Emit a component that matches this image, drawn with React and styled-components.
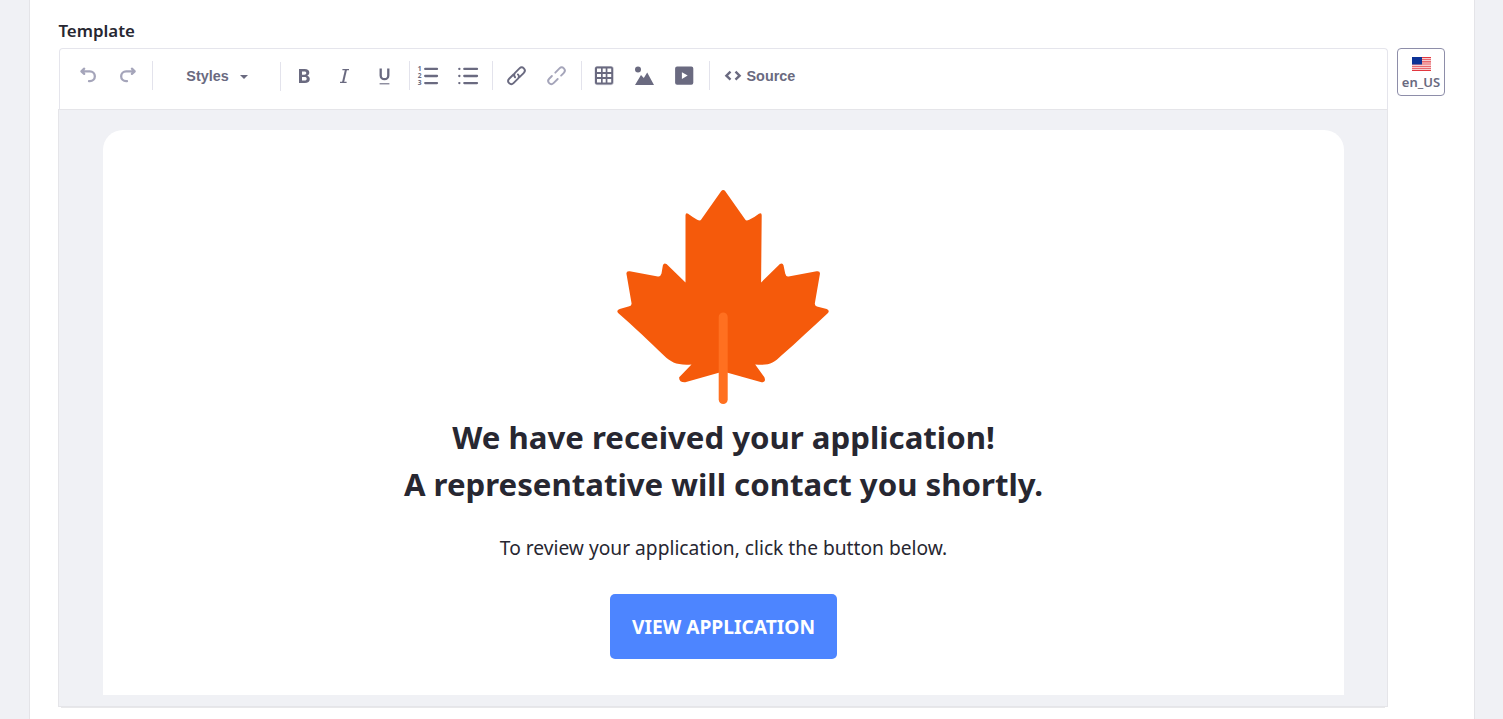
import React from "react";
import styled, { createGlobalStyle } from "styled-components";

const Global = createGlobalStyle`
  *, *::before, *::after { box-sizing: border-box; }
  body { margin: 0; background: #f0f1f5; font-family: "Noto Sans", sans-serif; overflow: hidden; }
`;

const Page = styled.div`
  height: 719px;
  padding: 0 28px 0 29px;
`;
const Panel = styled.main`
  height: 719px;
  padding: 21px 29px 0 28px;
  background: #fff;
  border: solid #e4e4e8;
  border-width: 0 1px;
`;
const Label = styled.h2`
  margin: 0;
  height: 27px;
  padding-left: 0.4px;
  font-size: 16.9px;
  font-weight: 600;
  line-height: 20px;
  color: #272731;
`;
const Columns = styled.div`
  display: flex;
  align-items: flex-start;
  gap: 9px;
`;
const Editor = styled.section`
  width: 1330px;
`;
const Toolbar = styled.div`
  display: flex;
  align-items: flex-start;
  height: 61px;
  margin-left: 1px;
  padding: 12px 0 0 8px;
  border: 1px solid #e5e5ec;
  border-bottom: 0;
  border-radius: 4px 4px 0 0;
`;
const Tool = styled.button`
  display: flex;
  align-items: center;
  justify-content: center;
  width: 40px;
  height: 29px;
  padding: 0;
  border: 0;
  background: none;
  color: ${(p) => (p.$muted ? "#a5a5ba" : "#6a6a80")};
`;
const Separator = styled.span`
  width: 1px;
  height: 29px;
  margin: ${(p) => p.$top || 0}px ${(p) => p.$right}px 0 ${(p) => p.$left}px;
  background: #e3e3ec;
`;
const TextTool = styled(Tool)`
  width: auto;
  font: bold 14.4px "Liberation Sans", Arial, sans-serif;
`;
const StylesTool = styled(TextTool)`
  width: 127px;
  gap: 11px;
  padding-left: 1px;
`;
const SourceTool = styled(TextTool)`
  gap: 4.5px;
`;
const Caret = styled.span`
  margin-top: 2px;
  border: solid transparent;
  border-width: 4px 4.5px 0;
  border-top-color: currentColor;
`;
const Canvas = styled.div`
  height: 598px;
  padding: 20px 43px 11px 44px;
  background: #f0f1f5;
  border: 1px solid #e5e5e9;
`;
const CanvasShadow = styled.div`
  height: 1px;
  margin: 0 3px;
  background: #e8e8ea;
`;
const Mail = styled.article`
  display: flex;
  flex-direction: column;
  align-items: center;
  height: 565px;
  padding-top: 60px;
  background: #fff;
  border-radius: 20px 20px 0 0;
  color: #272731;
`;
const Title = styled.h1`
  margin: 4px 0 0;
  font-size: 31.2px;
  font-weight: 700;
  line-height: 47px;
  text-align: center;
`;
const Copy = styled.p`
  margin: 25px 0 0;
  font-size: 19.2px;
  line-height: 30px;
`;
const Cta = styled.a`
  display: flex;
  align-items: center;
  justify-content: center;
  width: 227px;
  height: 65px;
  margin-top: 31px;
  border-radius: 5px;
  background: #4d85ff;
  color: #fff;
  font-size: 19.2px;
  font-weight: 700;
`;
const Locale = styled.button`
  display: flex;
  flex-direction: column;
  align-items: center;
  gap: 2px;
  width: 48px;
  height: 48px;
  padding: 8px 0 0;
  border: 1px solid #8e8ea9;
  border-radius: 4px;
  background: #fff;
  color: #6a6a80;
  font: 600 13px/18px "Noto Sans", sans-serif;
  white-space: nowrap;
`;

const Icon = ({ children, ...rest }) => (
  <svg width="20" height="20" viewBox="0 0 20 20" fill="currentColor" overflow="visible" {...rest}>{children}</svg>
);
const Line = ({ children, width = 2, cap = "round" }) => (
  <Icon fill="none" stroke="currentColor" strokeWidth={width} strokeLinecap={cap} strokeLinejoin="round">{children}</Icon>
);

const UndoArrow = () => (
  <Line width={2.3}>
    <path d="M6.2 2.7 3.4 5.3l2.8 2.6M4 5.3h7.9a4.8 4.8 0 0 1 0 9.9h-.9" />
  </Line>
);
const RedoArrow = () => (
  <Line width={2.3}>
    <path d="m13.9 2.7 2.8 2.6-2.8 2.6M16 5.3H8.1a4.8 4.8 0 0 0 0 9.9H9" />
  </Line>
);
const Bold = () => (
  <Icon>
    <path
      fillRule="evenodd"
      d="M5 3h5.7c3 0 4.6 1.3 4.6 3.6 0 1.5-.7 2.6-2 3.1 1.6.5 2.5 1.6 2.5 3.3 0 2.6-1.8 4-4.9 4H5Zm3 2.4v3.3h2.3c1.3 0 2-.6 2-1.7s-.7-1.6-2-1.6Zm0 5.6v3.6h2.6c1.4 0 2.1-.6 2.1-1.8s-.7-1.8-2.1-1.8Z"
    />
  </Icon>
);
const Italic = () => (
  <Line width={1.4} cap="butt">
    <path d="M8.4 3.6H15M6 16.4h6.6" />
    <path strokeWidth="2" d="M12 3.6 9 16.4" />
  </Line>
);
const Underline = () => (
  <Line width={2.3} cap="butt">
    <path d="M6.7 2.6v6.8a3.8 3.8 0 0 0 7.6 0V2.6" />
    <path strokeWidth="1.1" d="M5.6 17.8h9.8" />
  </Line>
);
const Digits = styled.text`
  font: bold 6.6px "Noto Sans", sans-serif;
  fill: currentColor;
  stroke: none;
`;
const Numbered = () => (
  <Line width={2.3}>
    <path d="M7.2 2.9H19M7.2 10H19M7.2 17.1H19" />
    <Digits x="-.2" y="5.2">1</Digits>
    <Digits x="-.2" y="12.3">2</Digits>
    <Digits x="-.2" y="19.3">3</Digits>
  </Line>
);
const Bullets = () => (
  <Line width={2.3}>
    <path d="M6.3 2.9H19M6.3 10H19M6.3 17.1H19" />
    <path d="M1.3 2.9h.1M1.3 10h.1M1.3 17.1h.1" />
  </Line>
);
const Link = () => (
  <Line width={1.9}>
    <g transform="translate(10.5 9.8) rotate(-45)">
      <path d="M1.2 3.1H7.3a3.1 3.1 0 0 0 0-6.2H1a3.1 3.1 0 0 0-3 3.1" />
      <path d="M-1.2-3.1H-7.3a3.1 3.1 0 0 0 0 6.2H-1a3.1 3.1 0 0 0 3-3.1" />
    </g>
  </Line>
);
const Unlink = () => (
  <Line width={1.9}>
    <g transform="translate(10.5 9.8) rotate(-45)">
      <path d="M3.4 3.1H7.3a3.1 3.1 0 0 0 0-6.2H1.4" />
      <path d="M-3.4-3.1H-7.3a3.1 3.1 0 0 0 0 6.2H-1.4" />
    </g>
  </Line>
);
const Table = () => (
  <Icon viewBox="-.5 .5 20 20">
    <path fillRule="evenodd" d="M2.5 1h14a2 2 0 0 1 2 2v14a2 2 0 0 1-2 2h-14a2 2 0 0 1-2-2V3a2 2 0 0 1 2-2ZM2.5 3v3.5h4V3Zm5.7 0v3.5h3V3Zm4.7 0v3.5h3.8V3ZM2.5 8.4v3.2h4V8.4Zm5.7 0v3.2h3V8.4Zm4.7 0v3.2h3.8V8.4ZM2.5 13.4V17h4v-3.6Zm5.7 0V17h3v-3.6Zm4.7 0V17h3.8v-3.6Z" />
    <path d="M.5 3a2 2 0 0 1 2-2h14.3a2.2 2.2 0 0 1 2.2 2v14a2.2 2.2 0 0 1-2.2 2.2H2.5a2 2 0 0 1-2-2.2Z" fill="none" stroke="currentColor" strokeWidth=".3" />
  </Icon>
);
const Picture = () => (
  <Icon><circle cx="4" cy="3.4" r="3" /><path d="m1 18.9 6-9.8 2.8 2.8L13.2 6.5 20 18.9z" /></Icon>
);
const Media = () => (
  <Icon viewBox="-.7 .5 20 20">
    <path fillRule="evenodd" d="M2.4 1h14.2A2 2 0 0 1 18.6 3v14.2a2 2 0 0 1-2 2H2.4a2 2 0 0 1-2-2V3a2 2 0 0 1 2-2ZM7.2 6.8v6.6L13 10.1Z" />
  </Icon>
);
const Code = () => (
  <svg width="18" height="12" viewBox="0 0 18 12" fill="none" stroke="currentColor" strokeWidth="2.4">
    <path d="M6.5 1.7 2.4 5.7l4.1 4M11.5 1.7l4.1 4-4.1 4" />
  </svg>
);
const Flag = () => (
  <svg width="19" height="14" viewBox="0 0 19 14">
    <path fill="#fff" d="M0 0h19v14H0z" />
    <path stroke="#e2373f" strokeWidth="1.1" d="M0 .6h19M0 2.7h19M0 4.9h19M0 7h19M0 9.2h19M0 11.3h19M0 13.4h19" />
    <path fill="#0c3296" d="M0 0h10v7.5H0z" />
  </svg>
);

const Leaf = () => (
  <svg width="226" height="220" viewBox="0 0 226 220">
    <path
      transform="translate(112.2 0)"
      fill="#f55a0b"
      d="M0 0Q1.2 0 2.1 1.2L22 29.5Q23 31.2 26 29.7 31 27.5 35.7 23.7 38.5 22.3 38.5 25.2L37.9 92.5 56.7 74Q59.4 72.4 60.3 75.3L62 83.5Q62.8 87 65.4 86.4L93.4 81.3Q96.9 80.8 96.8 83.6L91.7 113Q91.2 115.6 93.7 116.5L103.5 118.9Q107 120.6 104.5 123.3C89 137.5 74 152 58.2 165.5 50 173.5 46 175.5 32 174.5L41.2 187.2Q43.2 192.4 38.3 192.3L0 181.6-38 192.3Q-44.6 192.5-44 187.2L-31.7 174.5C-46 175.5-52 172.5-59.3 165.5-73 152.5-89 137-104.8 123.3Q-107.5 120.6-103.5 118.9L-93.9 116.3Q-91.3 115.6-91.7 113L-96.8 83.6Q-96.9 80.8-93.4 81.3L-65.4 86.4Q-62.8 87-61.7 83.5L-60.3 75.3Q-59.4 72.4-56.7 74L-37.7 92.5V25.2Q-37.5 22.3-35.1 23.7-30 27.5-26 29.7-23 31.2-22 29.5L-2.1 1.2Q-1.2 0 0 0Z"
    />
    <rect x="107.7" y="122.5" width="9" height="91.5" rx="4.5" fill="#ff7020" />
  </svg>
);

export default function App() {
  return (
    <Page>
      <Global />
      <Panel>
        <Label>Template</Label>
        <Columns>
          <Editor>
            <Toolbar>
              <Tool $muted aria-label="Undo"><UndoArrow /></Tool>
              <Tool $muted aria-label="Redo"><RedoArrow /></Tool>
              <Separator $left={4} $right={0} />
              <StylesTool>Styles<Caret /></StylesTool>
              <Separator $left={0} $right={3} $top={1} />
              <Tool aria-label="Bold"><Bold /></Tool>
              <Tool aria-label="Italic"><Italic /></Tool>
              <Tool aria-label="Underline"><Underline /></Tool>
              <Separator $left={5} $right={-2} />
              <Tool aria-label="Numbered list"><Numbered /></Tool>
              <Tool aria-label="Bulleted list"><Bullets /></Tool>
              <Separator $left={4} $right={3} />
              <Tool aria-label="Link"><Link /></Tool>
              <Tool $muted aria-label="Unlink"><Unlink /></Tool>
              <Separator $left={5} $right={2} />
              <Tool aria-label="Table"><Table /></Tool>
              <Tool aria-label="Image"><Picture /></Tool>
              <Tool aria-label="Media"><Media /></Tool>
              <Separator $left={5} $right={14} />
              <SourceTool><Code />Source</SourceTool>
            </Toolbar>
            <Canvas>
              <Mail>
                <Leaf />
                <Title>We have received your application!<br />A representative will contact you shortly.</Title>
                <Copy>To review your application, click the button below.</Copy>
                <Cta>VIEW APPLICATION</Cta>
              </Mail>
            </Canvas>
            <CanvasShadow />
          </Editor>
          <Locale><Flag />en_US</Locale>
        </Columns>
      </Panel>
    </Page>
  );
}
